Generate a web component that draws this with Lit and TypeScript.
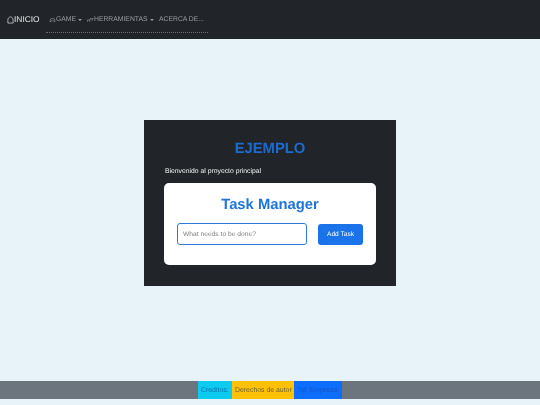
import { LitElement, html, css } from "lit";
import { customElement } from "lit/decorators.js";

@customElement("app-root")
export class AppRoot extends LitElement {
  static styles = css`
    :host { display: flex; flex-direction: column; width: 540px; height: 405px; background: #e7f3f9; font-family: "Liberation Sans", Arial, sans-serif; overflow: hidden; text-rendering: geometricPrecision; }
    .brand, .link, .welcome, h1, h2, .input, .btn, .footer span { will-change: transform; }
    .nav { height: 39px; background: #212529; display: flex; align-items: flex-start; flex: none; padding-left: 7px; box-sizing: border-box; }
    .brand { color: #e6e6e6; font-size: 8.400px; line-height: 11px; margin-top: 14px; display: flex; align-items: center; width: 39px; }
    .brand svg { width: 7px; height: 8px; }
    .links { width: 162px; height: 33px; border-bottom: 1px dotted #6a6e71; display: flex; gap: 5px; padding-left: 3px; box-sizing: border-box; color: #9a9da0; font-size: 6.800px; }
    .link { display: flex; align-items: center; height: 11px; margin-top: 14px; white-space: nowrap; }
    .link svg { width: 7px; height: 6px; }
    .caret { width: 0; height: 0; border: 2px solid transparent; border-top-color: #9a9da0; border-bottom: 0; margin-left: 2px; }
    .main { flex: 1; display: flex; align-items: center; justify-content: center; padding-bottom: 14px; }
    .panel { width: 252px; height: 166px; background: #212529; box-sizing: border-box; padding: 19px 20px 0; color: #fff; display: flex; flex-direction: column; }
    h1 { margin: 0; font-size: 14.800px; line-height: 20px; color: #1c6cd0; text-align: center; font-weight: 700; }
    .welcome { font-size: 6.800px; line-height: 9px; margin-top: 8px; margin-left: 1px; color: #f2f2f2; }
    .card { margin-top: 7px; height: 82px; background: #fff; border-radius: 5px; box-sizing: border-box; padding: 12px 13px 0; }
    h2 { margin: 0; font-size: 14.800px; line-height: 20px; color: #1d74dc; text-align: center; font-weight: 700; }
    .row { display: flex; align-items: center; justify-content: space-between; margin-top: 8px; }
    .input { width: 130px; height: 22px; box-sizing: border-box; border: 1px solid #2f7ad6; border-radius: 3px; color: #7d7d7d; font-size: 6.700px; display: flex; align-items: center; padding-left: 5px; }
    .btn { width: 45px; height: 21px; background: #1a73e8; color: #fff; border-radius: 3px; font-size: 6.600px; display: flex; align-items: center; justify-content: center; }
    .footer { height: 18px; flex: none; margin-bottom: 6px; background: #6c757d; display: flex; justify-content: center; font-size: 6.900px; }
    .footer div { display: flex; align-items: center; justify-content: center; }
    .c1 { width: 34px; background: #0dcaf0; color: #0a6fa8; }
    .c2 { width: 62px; background: #ffc107; color: #6c6330; }
    .c3 { width: 48px; background: #0d6efd; color: #1256c4; }
  `;
  render() {
    return html`
      <div class="nav">
        <div class="brand"><svg viewBox="0 0 8 9" fill="none" stroke="#e6e6e6" stroke-width=".8"><path d="M1 8V4.500C1 2.500 2.500 1 4 1s3 1.500 3 3.500V8z"/></svg>INICIO</div>
        <div class="links">
          <div class="link"><svg viewBox="0 0 8 6" fill="none" stroke="#9a9da0" stroke-width=".7"><path d="M1 5l1-3.500h4l1 3.500-2-1H3z"/></svg>GAME<span class="caret"></span></div>
          <div class="link"><svg viewBox="0 0 8 6" fill="none" stroke="#9a9da0" stroke-width=".7"><path d="M.5 5V3h3V1.500h4M3 3v2M6 1.500V4"/></svg>HERRAMIENTAS<span class="caret"></span></div>
          <div class="link">ACERCA DE...</div>
        </div>
      </div>
      <div class="main">
        <div class="panel">
          <h1>EJEMPLO</h1>
          <div class="welcome">Bienvenido al proyecto principal</div>
          <div class="card">
            <h2>Task Manager</h2>
            <div class="row">
              <div class="input">What needs to be done?</div>
              <div class="btn">Add Task</div>
            </div>
          </div>
        </div>
      </div>
      <div class="footer">
        <div class="c1"><span>Creditos:</span></div>
        <div class="c2"><span>Derechos de autor</span></div>
        <div class="c3"><span>Tel: Empresa:</span></div>
      </div>
    `;
  }
}
